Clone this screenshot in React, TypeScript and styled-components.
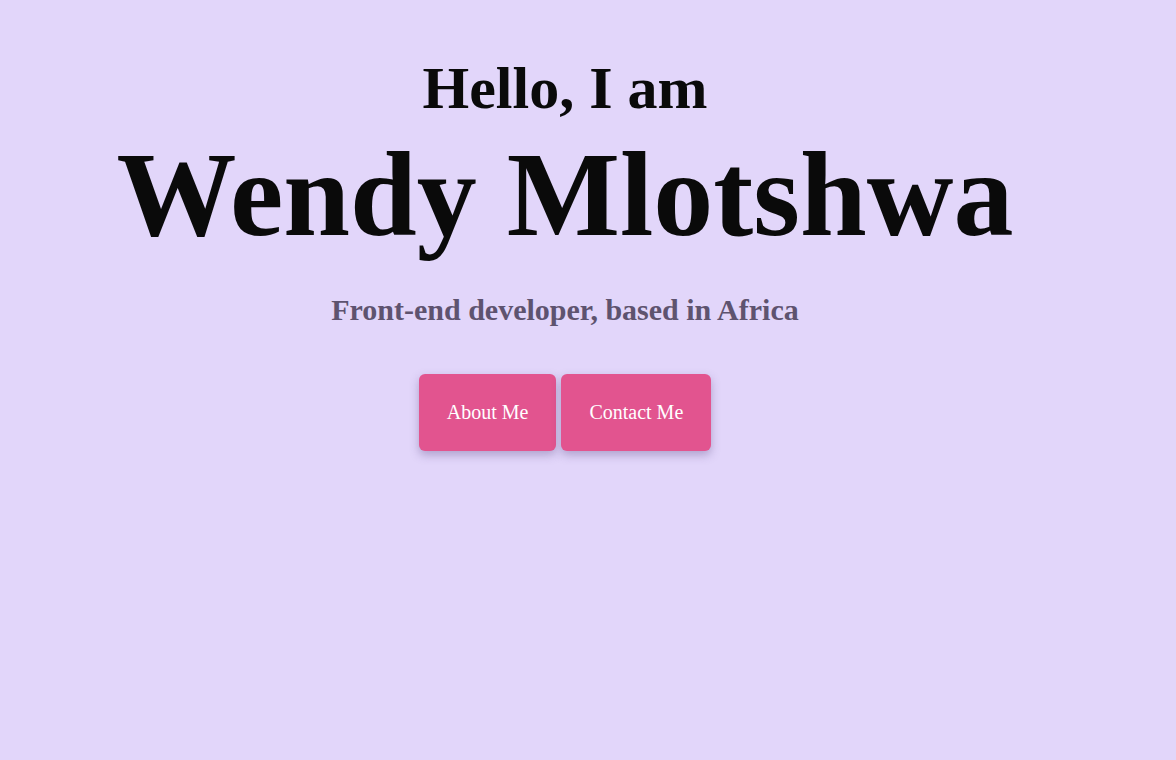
import { createGlobalStyle, styled } from "styled-components";

const GlobalStyle = createGlobalStyle`
  html, body {
    margin: 0;
    padding: 0;
    background: #e2d6fa;
    min-height: 100%;
  }
  body {
    font-family: "Liberation Serif", "Times New Roman", serif;
  }
`;

const Hero = styled.section`
  width: 1130px;
  min-height: 760px;
  display: flex;
  flex-direction: column;
  align-items: center;
  text-align: center;
  padding-top: 58px;
  box-sizing: border-box;
`;

const Greeting = styled.h2`
  margin: 0;
  font-size: 60px;
  font-weight: bold;
  line-height: 60px;
  color: #0a0a0a;
`;

const Name = styled.h1`
  margin: 17px 0 0;
  font-size: 120px;
  font-weight: bold;
  line-height: 120px;
  color: #0a0a0a;
`;

const Tagline = styled.h3`
  margin: 40px 0 0;
  font-size: 30px;
  font-weight: bold;
  line-height: 30px;
  color: #5e536f;
`;

const Actions = styled.div`
  display: flex;
  gap: 5px;
  margin-top: 49px;
`;

const Button = styled.button`
  height: 77px;
  padding: 0 28px;
  border: none;
  border-radius: 6px;
  background: #e2548f;
  color: #ffffff;
  font-family: "Liberation Serif", "Times New Roman", serif;
  font-size: 20px;
  box-shadow: 0 4px 10px rgba(80, 60, 120, 0.35);
  cursor: pointer;
`;

export default function App() {
  return (
    <>
      <GlobalStyle />
      <Hero>
        <Greeting>Hello, I am</Greeting>
        <Name>Wendy Mlotshwa</Name>
        <Tagline>Front-end developer, based in Africa</Tagline>
        <Actions>
          <Button>About Me</Button>
          <Button>Contact Me</Button>
        </Actions>
      </Hero>
    </>
  );
}
